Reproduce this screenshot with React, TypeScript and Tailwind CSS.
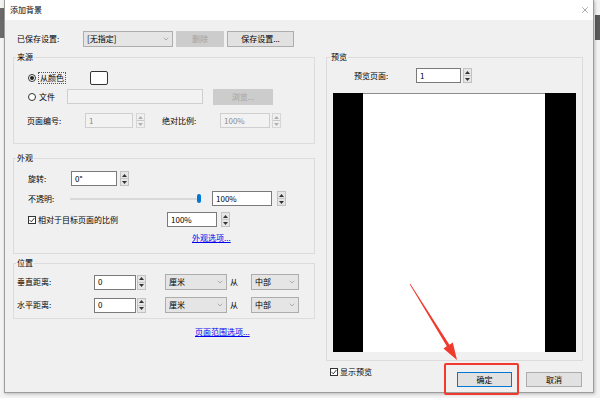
import { ChevronDown, X } from 'lucide-react';

function Spinner({ disabled = false, className = '' }: { disabled?: boolean; className?: string }) {
    const fill = disabled ? '#b0b0b0' : '#333333';
    return (
        <div
            className={`flex h-[15px] w-[9px] shrink-0 flex-col border ${
                disabled ? 'border-[#d6d6d6] bg-[#f0f0f0]' : 'border-[#c2c2c2] bg-[#e6e6e6]'
            } ${className}`}
        >
            <div className="flex flex-1 items-center justify-center border-b border-[#c8c8c8]">
                <svg width="5" height="3" viewBox="0 0 5 3">
                    <path d="M0 3L2.5 0L5 3Z" fill={fill} />
                </svg>
            </div>
            <div className="flex flex-1 items-center justify-center">
                <svg width="5" height="3" viewBox="0 0 5 3">
                    <path d="M0 0L2.5 3L5 0Z" fill={fill} />
                </svg>
            </div>
        </div>
    );
}

function Field({ value, width, disabled = false }: { value: string; width: string; disabled?: boolean }) {
    return (
        <div
            className={`flex h-[15px] shrink-0 items-center border px-[3px] ${width} ${
                disabled ? 'border-[#cfcfcf] bg-[#f2f2f2] text-[#8a8a8a]' : 'border-[#7a7a7a] bg-white'
            }`}
        >
            {value}
        </div>
    );
}

function Select({ value, width }: { value: string; width: string }) {
    return (
        <div
            className={`flex h-[16px] shrink-0 items-center justify-between border border-[#adadad] bg-[#e5e5e5] pl-[3px] pr-[2px] ${width}`}
        >
            <span>{value}</span>
            <ChevronDown size={8} strokeWidth={1.2} className="text-[#555]" />
        </div>
    );
}

function Radio({ checked = false }: { checked?: boolean }) {
    return (
        <span className="flex h-[8px] w-[8px] shrink-0 items-center justify-center rounded-full border border-[#333] bg-white">
            {checked && <span className="h-[4px] w-[4px] rounded-full bg-[#222]" />}
        </span>
    );
}

function Check() {
    return (
        <span className="flex h-[8px] w-[8px] shrink-0 items-center justify-center border border-[#333] bg-white">
            <svg width="6" height="6" viewBox="0 0 6 6">
                <path d="M0.6 3.1L2.3 4.8L5.4 1" fill="none" stroke="#222" strokeWidth="0.9" />
            </svg>
        </span>
    );
}

function Group({ title, className, children }: { title: string; className: string; children: React.ReactNode }) {
    return (
        <fieldset className={`border border-[#dcdcdc] ${className}`}>
            <legend className="ml-[2px] h-[10px] px-[1px] leading-[10px]">{title}</legend>
            {children}
        </fieldset>
    );
}

export default function App() {
    return (
        <div className="relative h-[398px] w-[600px] overflow-hidden bg-[#f3f3f3] font-['Microsoft_YaHei','Noto_Sans_CJK_SC',sans-serif] text-[8px] leading-none text-black">
            <div className="absolute left-0 top-[8px] h-[30px] w-[4px] bg-[#6a6a6a]" />
            <div className="absolute right-0 top-[15px] h-[25px] w-[5px] bg-[#5a5a5a]" />

            <div className="relative ml-[4px] flex h-[393px] w-[590px] flex-col border-x border-b border-[#9c9c9c] bg-[#f0f0f0] shadow-[1px_1px_3px_rgba(0,0,0,0.25)]">
                {/* title bar */}
                <div className="flex h-[20px] shrink-0 items-center justify-between bg-white pl-[5px] pr-[3px]">
                    <span>添加背景</span>
                    <X size={10} strokeWidth={1} className="text-[#333]" />
                </div>

                <div className="flex flex-1 gap-[11px] pl-[8px] pr-[10px] pt-[11px]">
                    {/* left column */}
                    <div className="flex w-[302px] flex-col">
                        <div className="flex h-[15px] items-center">
                            <span className="ml-[4px] w-[66px]">已保存设置:</span>
                            <Select value="[无指定]" width="w-[90px]" />
                            <div className="ml-[3px] flex h-[16px] w-[48px] items-center justify-center bg-[#cccccc] text-[#a3a3a3]">
                                删除
                            </div>
                            <div className="ml-[3px] flex h-[16px] w-[67px] items-center justify-center border border-[#adadad] bg-[#e1e1e1]">
                                保存设置...
                            </div>
                        </div>

                        <Group title="来源" className="mt-[6px]">
                            <div className="h-[81px] pt-[8px]">
                                <div className="flex h-[15px] items-center pl-[14px]">
                                    <div className="flex w-[62px] items-center">
                                        <Radio checked />
                                        <span className="ml-[2px] border border-dotted border-[#555] px-[1px] py-[1px]">
                                            从颜色
                                        </span>
                                    </div>
                                    <div className="h-[14px] w-[18px] rounded-[2px] border border-[#333] bg-white" />
                                </div>
                                <div className="mt-[4px] flex h-[15px] items-center pl-[14px]">
                                    <div className="flex w-[39px] items-center">
                                        <Radio />
                                        <span className="ml-[3px]">文件</span>
                                    </div>
                                    <Field value="" width="w-[136px]" disabled />
                                    <div className="ml-[10px] flex h-[16px] w-[60px] items-center justify-center bg-[#cccccc] text-[#a3a3a3]">
                                        浏览...
                                    </div>
                                </div>
                                <div className="mt-[9px] flex h-[15px] items-center pl-[13px]">
                                    <span className="w-[58px]">页面编号:</span>
                                    <Field value="1" width="w-[48px]" disabled />
                                    <Spinner disabled className="ml-[3px]" />
                                    <span className="ml-[17px] w-[58px]">绝对比例:</span>
                                    <Field value="100%" width="w-[50px]" disabled />
                                    <Spinner disabled className="ml-[2px]" />
                                </div>
                            </div>
                        </Group>

                        <Group title="外观" className="mt-[9px]">
                            <div className="h-[90px] pt-[8px]">
                                <div className="flex h-[15px] items-center pl-[14px]">
                                    <span className="w-[43px]">旋转:</span>
                                    <Field value="0°" width="w-[46px]" />
                                    <Spinner className="ml-[3px]" />
                                </div>
                                <div className="mt-[5px] flex h-[15px] items-center pl-[14px]">
                                    <span className="w-[42px]">不透明:</span>
                                    <div className="flex w-[131px] items-center">
                                        <div className="h-[2px] w-[127px] bg-[#d9d9d9]" />
                                        <div className="h-[9px] w-[4px] rounded-[2px] bg-[#0078d7]" />
                                    </div>
                                    <div className="ml-[11px]">
                                        <Field value="100%" width="w-[60px]" />
                                    </div>
                                    <Spinner className="ml-[5px]" />
                                </div>
                                <div className="mt-[6px] flex h-[15px] items-center pl-[14px]">
                                    <div className="flex w-[139px] items-center">
                                        <Check />
                                        <span className="ml-[2px]">相对于目标页面的比例</span>
                                    </div>
                                    <Field value="100%" width="w-[50px]" />
                                    <Spinner className="ml-[4px]" />
                                </div>
                                <div className="mt-[6px] flex h-[10px] items-center pl-[178px]">
                                    <span className="text-[#0000ee] underline">外观选项...</span>
                                </div>
                            </div>
                        </Group>

                        <Group title="位置" className="mt-[4px]">
                            <div className="h-[50px] pt-[6px]">
                                <div className="flex h-[16px] items-center pl-[3px]">
                                    <span className="w-[77px]">垂直距离:</span>
                                    <Field value="0" width="w-[42px]" />
                                    <Spinner className="ml-[1px]" />
                                    <div className="ml-[19px]">
                                        <Select value="厘米" width="w-[62px]" />
                                    </div>
                                    <span className="ml-[3px] w-[21px]">从</span>
                                    <Select value="中部" width="w-[48px]" />
                                </div>
                                <div className="mt-[7px] flex h-[16px] items-center pl-[3px]">
                                    <span className="w-[77px]">水平距离:</span>
                                    <Field value="0" width="w-[42px]" />
                                    <Spinner className="ml-[1px]" />
                                    <div className="ml-[19px]">
                                        <Select value="厘米" width="w-[62px]" />
                                    </div>
                                    <span className="ml-[3px] w-[21px]">从</span>
                                    <Select value="中部" width="w-[48px]" />
                                </div>
                            </div>
                        </Group>

                        <div className="mt-[8px] flex h-[10px] items-center pl-[182px]">
                            <span className="text-[#0000ee] underline">页面范围选项...</span>
                        </div>
                    </div>

                    {/* right column */}
                    <div className="flex w-[257px] flex-col">
                        <fieldset className="mt-[21px] border border-[#dcdcdc]">
                            <legend className="ml-[3px] h-[10px] px-[1px] leading-[10px]">预览</legend>
                            <div className="h-[298px] pt-[6px]">
                                <div className="flex h-[15px] items-center pl-[27px]">
                                    <span className="w-[62px]">预览页面:</span>
                                    <Field value="1" width="w-[45px]" />
                                    <Spinner className="ml-[2px]" />
                                </div>
                                <div className="ml-[6px] mt-[10px] flex h-[259px] w-[243px] bg-black pl-[30px] pr-[31px]">
                                    <div className="flex-1 border-t border-[#8c8c8c] bg-white" />
                                </div>
                            </div>
                        </fieldset>
                        <div className="flex">
                            <div className="ml-[4px] mt-[7px] flex items-center self-start">
                                <Check />
                                <span className="ml-[2px]">显示预览</span>
                            </div>
                            <div className="ml-auto mr-[1px] mt-[11px] flex">
                                <div className="flex h-[15px] w-[55px] items-center justify-center border border-[#0078d7] bg-[#e1e1e1]">
                                    确定
                                </div>
                                <div className="ml-[14px] flex h-[15px] w-[56px] items-center justify-center border border-[#adadad] bg-[#e1e1e1]">
                                    取消
                                </div>
                            </div>
                        </div>
                    </div>
                </div>
            </div>

            {/* annotation */}
            <div className="absolute left-[444px] top-[363px] h-[32px] w-[75px] rounded-[2px] border-2 border-[#f03a2e]" />
            <svg className="pointer-events-none absolute left-0 top-0" width="600" height="398" viewBox="0 0 600 398">
                <polygon
                    points="410.3,283.8 449.4,344.7 452.8,342.6 457,360 443.4,348.4 446.8,346.3 409.7,284.2"
                    fill="#f03a2e"
                />
            </svg>
        </div>
    );
}
